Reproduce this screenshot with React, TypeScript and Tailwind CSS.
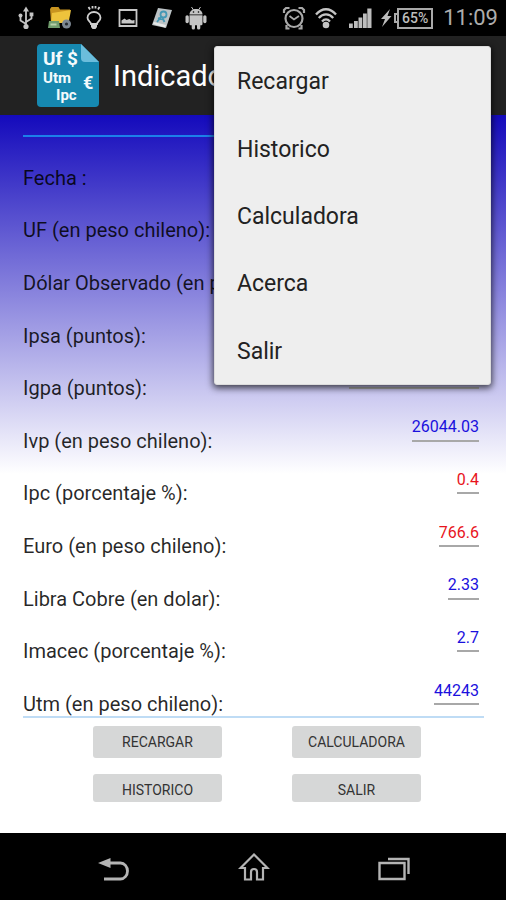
import type { ReactNode } from "react";

// ---- Data ----------------------------------------------------------------

type Indicator = {
  id: string;
  label: string;
  value?: string;
  tone?: "up" | "down";
};

const INDICATORS: Indicator[] = [
  { id: "fecha", label: "Fecha :" },
  { id: "uf", label: "UF (en peso chileno):" },
  { id: "dolar", label: "Dólar Observado (en peso chileno):" },
  { id: "ipsa", label: "Ipsa (puntos):" },
  { id: "igpa", label: "Igpa (puntos):" },
  { id: "ivp", label: "Ivp (en peso chileno):", value: "26044.03", tone: "up" },
  { id: "ipc", label: "Ipc (porcentaje %):", value: "0.4", tone: "down" },
  { id: "euro", label: "Euro (en peso chileno):", value: "766.6", tone: "down" },
  { id: "cobre", label: "Libra Cobre (en dolar):", value: "2.33", tone: "up" },
  { id: "imacec", label: "Imacec (porcentaje %):", value: "2.7", tone: "up" },
  { id: "utm", label: "Utm (en peso chileno):", value: "44243", tone: "up" },
];

const MENU_ITEMS = ["Recargar", "Historico", "Calculadora", "Acerca", "Salir"];

// ---- Status bar ----------------------------------------------------------

function Glyph({ children }: { children: ReactNode }) {
  return (
    <svg viewBox="0 0 24 24" className="h-6 w-6 shrink-0" aria-hidden>
      {children}
    </svg>
  );
}

function StatusBar() {
  return (
    <div className="flex h-9 items-center justify-between bg-black pl-[14px] pr-2">
      <div className="flex items-center gap-[10px]">
        {/* USB */}
        <Glyph>
          <g fill="none" stroke="#c4c4c4" strokeWidth="1.8">
            <path d="M12 4v16M12 18l-5.500-3.500V10M12 16l5.500-3.500V9" />
          </g>
          <g fill="#c4c4c4">
            <path d="M12 0.5l3 5H9z" />
            <circle cx="12" cy="20.5" r="2.6" />
            <circle cx="6.5" cy="9.5" r="2" />
            <path d="M15.6 6.500h3.800v3.800h-3.800z" />
          </g>
        </Glyph>
        {/* File manager */}
        <Glyph>
          <path d="M2 3l1.500-2h7L12 3.500h10L20 17H3z" fill="#c89420" />
          <path d="M4 7l19-3-2.500 13H3z" fill="#eec33c" />
          <path d="M1 15h10l1 7H0z" fill="#719d6d" />
          <path d="M2.500 17.500h6v2h-6z" fill="#b9d0a8" />
          <circle cx="18.500" cy="18" r="4.500" fill="#7c8792" />
          <circle cx="18.500" cy="18" r="1.600" fill="#252a2e" />
        </Glyph>
        {/* Bulb */}
        <Glyph>
          <g fill="none" stroke="#cfcfcf" strokeWidth="1.800">
            <path d="M9 18c0-2-3.500-3-3.500-6.300a6.500 5.700 0 0 1 13 0c0 3.300-3.500 4.300-3.500 6.300z" />
            <path d="M6.500 1l1.500 2.500M10.500 0v2.500M13.500 0v2.500M17.500 1L16 3.500" />
          </g>
          <path d="M9 17.500h6V21l-1.500 2h-3L9 21z" fill="#cfcfcf" />
        </Glyph>
        {/* Picture */}
        <Glyph>
          <path d="M3.500 4h17v16h-17z" fill="none" stroke="#c8c8c8" strokeWidth="1.800" />
          <path d="M5.500 17.500v-3l3-2 2 1.500 3-1 2.500 1.500 2.500-.5v3.500z" fill="#c8c8c8" />
        </Glyph>
        {/* Note */}
        <Glyph>
          <path d="M8 2l14 2-6 18-14-3z" fill="#bcc3c6" />
          <path d="M3 18l12 3.500 1-2.500-12-3z" fill="#e6e8e8" />
          <g fill="none" stroke="#4498b5" strokeWidth="1.800">
            <circle cx="13.500" cy="8.500" r="3" />
            <path d="M11 11l-4 5M12.500 12l2 4M8 12l6 2" />
          </g>
        </Glyph>
        {/* Android */}
        <Glyph>
          <g fill="#c4c4c4">
            <path d="M5.500 8.500C5.500 5 8.500 3 12 3s6.500 2 6.500 5.500z" />
            <path d="M5.500 9.200h13V18a1.200 1.200 0 0 1-1.200 1.200H6.700A1.200 1.200 0 0 1 5.500 18z" />
            <rect x="1.500" y="9.200" width="3.300" height="8" rx="1.600" />
            <rect x="19.200" y="9.200" width="3.300" height="8" rx="1.600" />
            <rect x="7.700" y="17" width="3.300" height="6.500" rx="1.600" />
            <rect x="13" y="17" width="3.300" height="6.500" rx="1.600" />
          </g>
          <path d="M7.500 1l2 3M16.500 1l-2 3" stroke="#c4c4c4" strokeWidth="1" />
          <circle cx="9.500" cy="6" r="0.800" />
          <circle cx="14.500" cy="6" r="0.800" />
        </Glyph>
      </div>

      <div className="flex items-center">
        {/* Alarm */}
        <svg viewBox="0 0 24 24" className="mr-2 h-6 w-6" aria-hidden>
          <g fill="none" stroke="#a9a9a9" strokeWidth="2.200">
            <circle cx="12" cy="12.500" r="8.500" />
            <path d="M7.500 10l4.500 3.500 5-3.500" strokeWidth="1.800" />
            <path d="M2 7V4l2-2h3.500M22 7V4l-2-2h-3.500M4.500 19v3.500h3M19.500 19v3.500h-3" />
          </g>
        </svg>
        {/* Wifi */}
        <svg viewBox="0 0 24 24" className="mr-[10px] h-6 w-6" aria-hidden>
          <g fill="none" stroke="#c4c4c4" strokeWidth="2.300">
            <path d="M2 8.500C8 1.500 16 1.500 22 8.500" />
            <path d="M4.800 12C9 7.200 15 7.200 19.200 12" />
            <path d="M8 15.500c2.500-2.800 5.500-2.800 8 0" />
          </g>
          <circle cx="12" cy="19" r="3.300" fill="#c4c4c4" />
        </svg>
        {/* Signal */}
        <svg viewBox="0 0 24 24" className="mr-2 h-6 w-6" aria-hidden>
          <g fill="#bdbdbd">
            <path d="M1 17.500h3.800V22H1zM6 15h3.800v7H6zM10.500 11.500h3.800V22h-3.800zM15 7.500h3.800V22H15z" />
            <path d="M19.300 2.500H23.500V22h-4.200z" />
          </g>
        </svg>
        {/* Battery with its charging bolt */}
        <svg viewBox="0 0 12 20" className="mr-[2px] h-5 w-3" aria-hidden>
          <path d="M10 1L1 11h4l-3 8 9.500-11H7.500z" fill="#bdbdbd" />
        </svg>
        <div className="h-[10px] w-[3px] border-y-2 border-l-2 border-[#a9a9a9]" />
        <div className="mr-[10px] flex h-[21px] w-9 items-center justify-center border-2 border-[#a9a9a9] text-[14px] leading-4 font-medium text-[#bdbdbd]">
          65%
        </div>
        <span className="text-[22px] leading-7 text-[#adadad]">11:09</span>
      </div>
    </div>
  );
}

// ---- Action bar ----------------------------------------------------------

function AppLogo() {
  return (
    <svg viewBox="0 0 64 64" className="h-16 w-16 shrink-0" aria-hidden>
      <path
        d="M5 0h40l18 18v41a4 4 0 0 1-4 4H5a4 4 0 0 1-4-4V4a4 4 0 0 1 4-4z"
        fill="#1688b0"
      />
      <path d="M45 0v14a4 4 0 0 0 4 4h14z" fill="#6bbddc" />
      <g fill="#f4fafc" fontFamily="Roboto, sans-serif" fontWeight="700">
        <text x="7" y="21" fontSize="19">Uf $</text>
        <text x="7" y="39" fontSize="15">Utm</text>
        <text x="47" y="45" fontSize="18">€</text>
        <text x="20" y="56" fontSize="15">Ipc</text>
      </g>
    </svg>
  );
}

function OverflowMenu() {
  return (
    <div
      role="menu"
      className="absolute top-[10px] right-[15px] z-10 grid h-[339px] w-[277px] auto-rows-fr rounded-[3px] border border-[#dcdcdc] bg-[#eeeeee] shadow-[0_2px_7px_1px_rgba(0,0,0,0.7)]"
    >
      {MENU_ITEMS.map((item) => (
        <button
          key={item}
          type="button"
          role="menuitem"
          className="px-[22px] pt-[3px] text-left text-[23px] leading-7 text-[#222222]"
        >
          {item}
        </button>
      ))}
    </div>
  );
}

// ---- Indicator list ------------------------------------------------------

function IndicatorRow({ indicator }: { indicator: Indicator }) {
  const { id, label, value = "", tone } = indicator;
  return (
    <div className="flex items-end justify-between">
      <label
        htmlFor={id}
        className="text-[20px] leading-6 whitespace-nowrap text-black/85"
      >
        {label}
      </label>
      <input
        id={id}
        readOnly
        value={value}
        className={`mr-[5px] mb-[11px] field-sizing-content h-[27px] border-b-2 border-[#a8a8a8] pb-px text-right text-[16px] leading-6 outline-none ${
          tone === "down" ? "text-[#e8141c]" : "text-[#1a10dd]"
        } ${value ? "" : "w-[130px]"}`}
      />
    </div>
  );
}

function ActionButton({ label, className }: { label: string; className: string }) {
  return (
    <button
      type="button"
      className={`w-[129px] rounded-[3px] bg-[#d6d7d7] text-[14px] leading-5 text-[#333333] uppercase ${className}`}
    >
      {label}
    </button>
  );
}

// ---- Navigation bar ------------------------------------------------------

function NavBar() {
  return (
    <nav className="flex h-[67px] items-center justify-center gap-[108px] bg-black pt-1 pl-[2px]">
      <button type="button" aria-label="Back">
        <svg viewBox="0 0 32 32" className="h-8 w-8" aria-hidden>
          <path d="M10 10h12.500a7 8 0 0 1 0 16H6" fill="none" stroke="#b4b4b4" strokeWidth="2.800" />
          <path d="M0 10l12.500-5v10z" fill="#b4b4b4" />
        </svg>
      </button>
      <button type="button" aria-label="Home">
        <svg viewBox="0 0 32 32" className="h-8 w-8" aria-hidden>
          <path
            d="M16 1.500L2.500 15h4.500v11.500h6V19a3 3 0 0 1 6 0v7.500h6V15h4.500z"
            fill="none"
            stroke="#b4b4b4"
            strokeWidth="2.200"
          />
        </svg>
      </button>
      <button type="button" aria-label="Recent apps">
        <svg viewBox="0 0 32 32" className="h-8 w-8" aria-hidden>
          <g fill="none" stroke="#b4b4b4" strokeWidth="2.400">
            <path d="M1.500 10h25v16h-25z" />
            <path d="M10 6h20.500V21" />
          </g>
        </svg>
      </button>
    </nav>
  );
}

// ---- Screen --------------------------------------------------------------

export default function App() {
  return (
    <div className="flex min-h-screen flex-col overflow-hidden bg-black font-[Roboto,sans-serif]">
      <StatusBar />

      <header className="relative flex h-[79px] items-center bg-[#222222] pl-9">
        <AppLogo />
        <h1 className="ml-[13px] text-[29px] leading-9 text-white">Indicadores</h1>
        <OverflowMenu />
      </header>

      <main className="flex-1 bg-linear-to-b/srgb from-[#140abc] via-white to-white pt-5 pr-[22px] pl-[23px]">
        <div className="grid h-[583px] auto-rows-fr border-t-2 border-b-2 border-t-[#1c80ea] border-b-[#bfdcf5]">
          {INDICATORS.map((indicator) => (
            <IndicatorRow key={indicator.id} indicator={indicator} />
          ))}
        </div>

        <div className="flex justify-center pt-2 pl-[7px]">
          <div className="grid grid-cols-2 gap-x-[70px] gap-y-4">
            <ActionButton label="Recargar" className="h-8" />
            <ActionButton label="Calculadora" className="h-8" />
            <ActionButton label="Historico" className="h-7 pt-1" />
            <ActionButton label="Salir" className="h-7 pt-1" />
          </div>
        </div>
      </main>

      <NavBar />
    </div>
  );
}
